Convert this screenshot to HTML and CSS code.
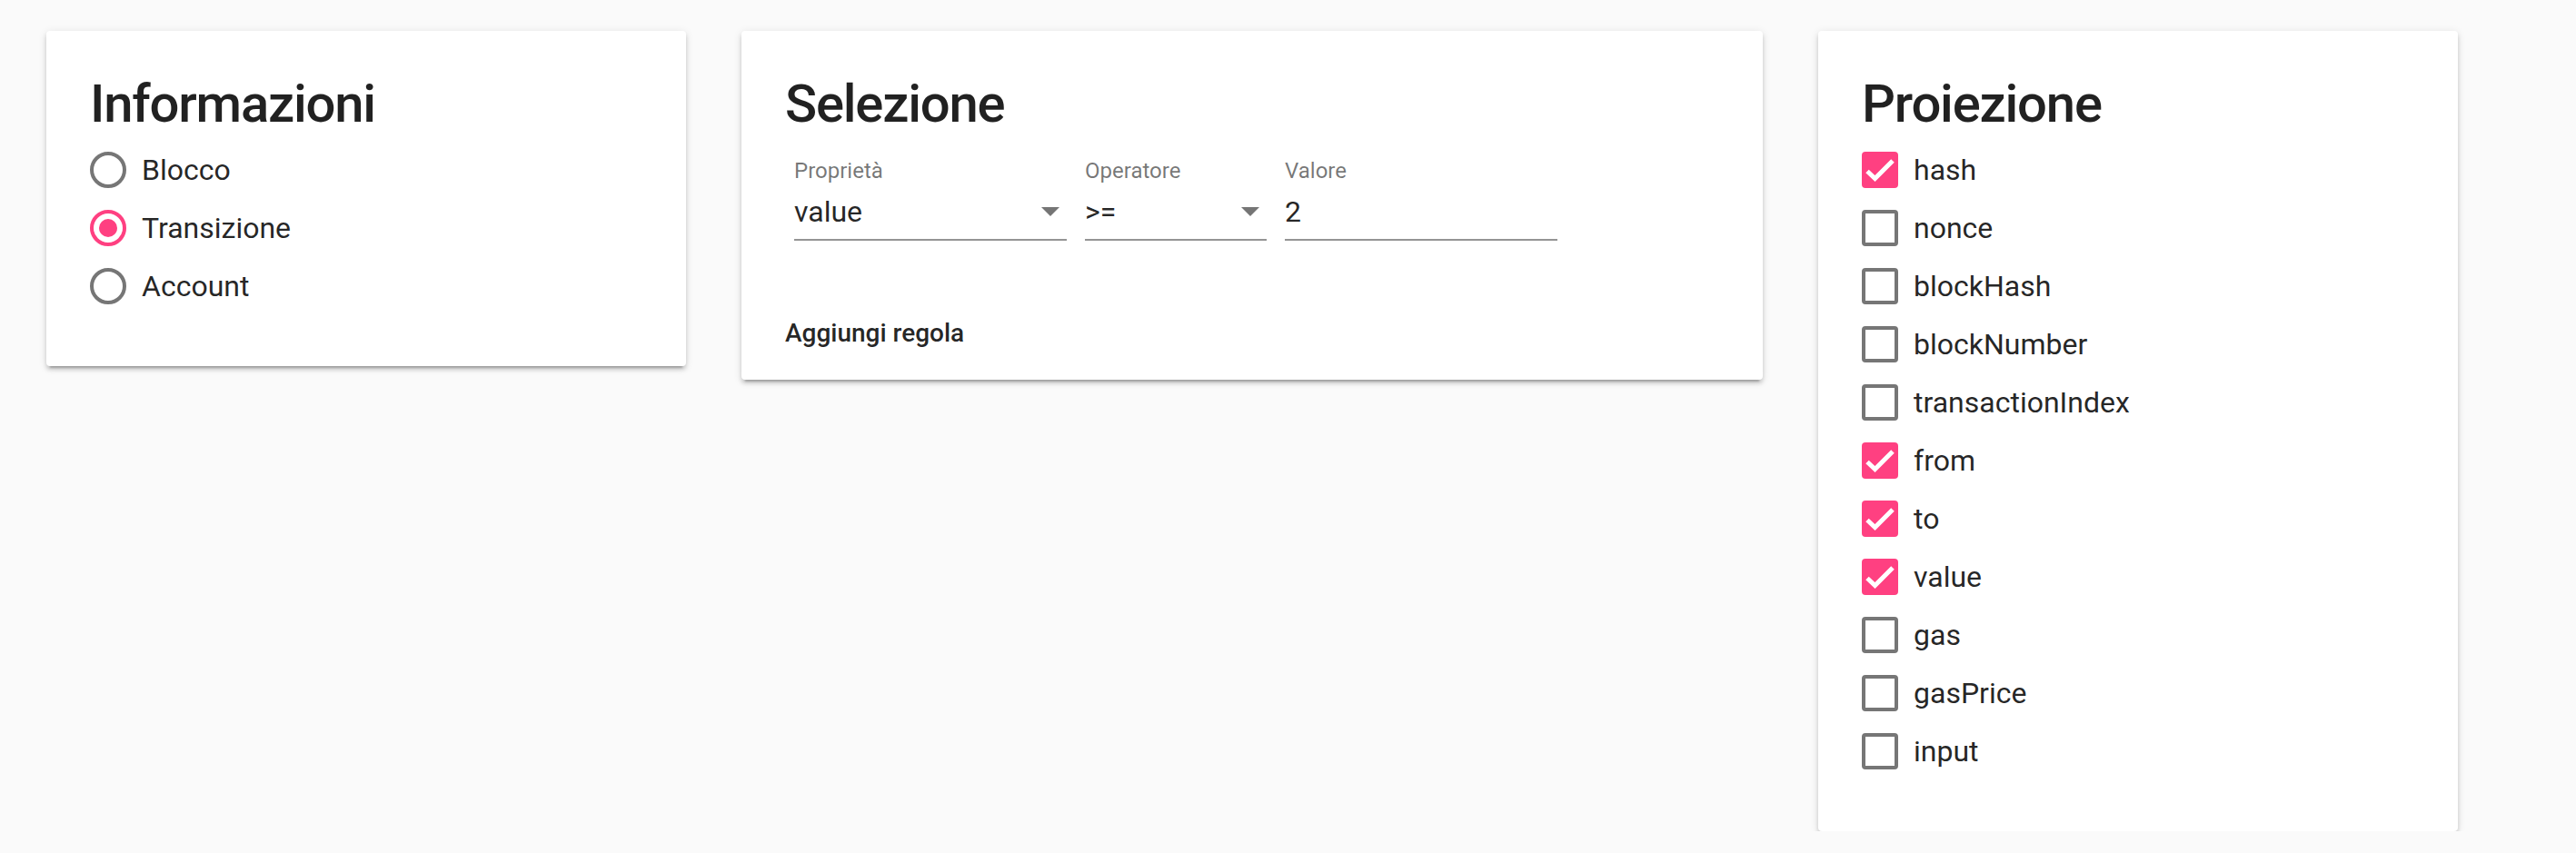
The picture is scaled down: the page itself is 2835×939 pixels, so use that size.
FILE: index.html
```html
<!DOCTYPE html>
<html lang="it">
<head>
<meta charset="utf-8">
<title>Query</title>
<link rel="stylesheet" href="styles.css">
</head>
<body>
<main class="page">
  <section class="card card-small">
    <h2 class="card-title">Informazioni</h2>
    <div class="options">
      <label class="option"><span class="radio"></span><span class="option-text">Blocco</span></label>
      <label class="option"><span class="radio radio-on"></span><span class="option-text">Transizione</span></label>
      <label class="option"><span class="radio"></span><span class="option-text">Account</span></label>
    </div>
  </section>

  <section class="card card-wide">
    <h2 class="card-title">Selezione</h2>
    <div class="fields">
      <div class="field field-300">
        <div class="field-label">Proprietà</div>
        <div class="field-input"><span class="field-value">value</span><span class="arrow"></span></div>
      </div>
      <div class="field field-200">
        <div class="field-label">Operatore</div>
        <div class="field-input"><span class="field-value">&gt;=</span><span class="arrow"></span></div>
      </div>
      <div class="field field-300">
        <div class="field-label">Valore</div>
        <div class="field-input"><span class="field-value">2</span></div>
      </div>
    </div>
    <div class="button-text">Aggiungi regola</div>
  </section>

  <section class="card card-small">
    <h2 class="card-title">Proiezione</h2>
    <div class="options">
      <label class="option"><span class="check check-on"><svg viewBox="0 0 40 40"><path d="M6 21.5 L14.5 29.5 L34 10"/></svg></span><span class="option-text">hash</span></label>
      <label class="option"><span class="check"></span><span class="option-text">nonce</span></label>
      <label class="option"><span class="check"></span><span class="option-text">blockHash</span></label>
      <label class="option"><span class="check"></span><span class="option-text">blockNumber</span></label>
      <label class="option"><span class="check"></span><span class="option-text">transactionIndex</span></label>
      <label class="option"><span class="check check-on"><svg viewBox="0 0 40 40"><path d="M6 21.5 L14.5 29.5 L34 10"/></svg></span><span class="option-text">from</span></label>
      <label class="option"><span class="check check-on"><svg viewBox="0 0 40 40"><path d="M6 21.5 L14.5 29.5 L34 10"/></svg></span><span class="option-text">to</span></label>
      <label class="option"><span class="check check-on"><svg viewBox="0 0 40 40"><path d="M6 21.5 L14.5 29.5 L34 10"/></svg></span><span class="option-text">value</span></label>
      <label class="option"><span class="check"></span><span class="option-text">gas</span></label>
      <label class="option"><span class="check"></span><span class="option-text">gasPrice</span></label>
      <label class="option"><span class="check"></span><span class="option-text">input</span></label>
    </div>
  </section>
</main>
</body>
</html>
```

FILE: styles.css
```css
html, body {
  margin: 0;
  padding: 0;
  background: #fafafa;
}

body {
  font-family: Roboto, "Liberation Sans", sans-serif;
  color: rgba(0, 0, 0, 0.87);
}

.page {
  display: flex;
  align-items: flex-start;
  gap: 61px;
  padding: 34px 0 0 51px;
}

.card {
  background: #fff;
  border-radius: 4px;
  box-shadow: 0 2px 10px rgba(0, 0, 0, 0.12), 0 4px 4px rgba(0, 0, 0, 0.14), 0 6px 2px -4px rgba(0, 0, 0, 0.2);
  padding: 44px 48px 56px 48px;
  box-sizing: border-box;
}

.card-small {
  width: 704px;
}

.card-wide {
  width: 1124px;
  padding-bottom: 15px;
}

.card-title {
  margin: 0 0 5px 0;
  font-size: 58px;
  line-height: 72px;
  font-weight: 500;
  letter-spacing: -1.2px;
  color: rgba(0, 0, 0, 0.87);
}

.options {
  display: flex;
  flex-direction: column;
}

.option {
  display: flex;
  align-items: center;
  height: 64px;
  gap: 17px;
  font-size: 32px;
}

.radio {
  width: 40px;
  height: 40px;
  box-sizing: border-box;
  border: 4px solid #767676;
  border-radius: 50%;
  display: flex;
  align-items: center;
  justify-content: center;
  flex: none;
}

.radio-on {
  border-color: #ff4081;
}

.radio-on::after {
  content: "";
  width: 20px;
  height: 20px;
  border-radius: 50%;
  background: #ff4081;
}

.check {
  width: 40px;
  height: 40px;
  box-sizing: border-box;
  border: 4px solid #767676;
  border-radius: 4px;
  flex: none;
  display: block;
}

.check-on {
  border: none;
  background: #ff4081;
}

.check svg {
  display: block;
  width: 40px;
  height: 40px;
}

.check svg path {
  fill: none;
  stroke: #fff;
  stroke-width: 5px;
}

.fields {
  display: flex;
  margin-top: 26px;
}

.field {
  margin: 0 10px;
}

.field-300 {
  width: 300px;
}

.field-200 {
  width: 200px;
}

.field-label {
  font-size: 24px;
  line-height: 24px;
  color: rgba(0, 0, 0, 0.54);
}

.field-input {
  margin-top: 13px;
  display: flex;
  align-items: center;
  justify-content: space-between;
  height: 40px;
  padding-bottom: 10px;
  border-bottom: 2px solid rgba(0, 0, 0, 0.42);
  font-size: 32px;
  line-height: 40px;
}

.arrow {
  width: 0;
  height: 0;
  border-left: 10px solid transparent;
  border-right: 10px solid transparent;
  border-top: 10px solid #757575;
  margin-right: 8px;
}

.button-text {
  margin-top: 66px;
  font-size: 28px;
  line-height: 72px;
  font-weight: 500;
  color: rgba(0, 0, 0, 0.87);
}
```
